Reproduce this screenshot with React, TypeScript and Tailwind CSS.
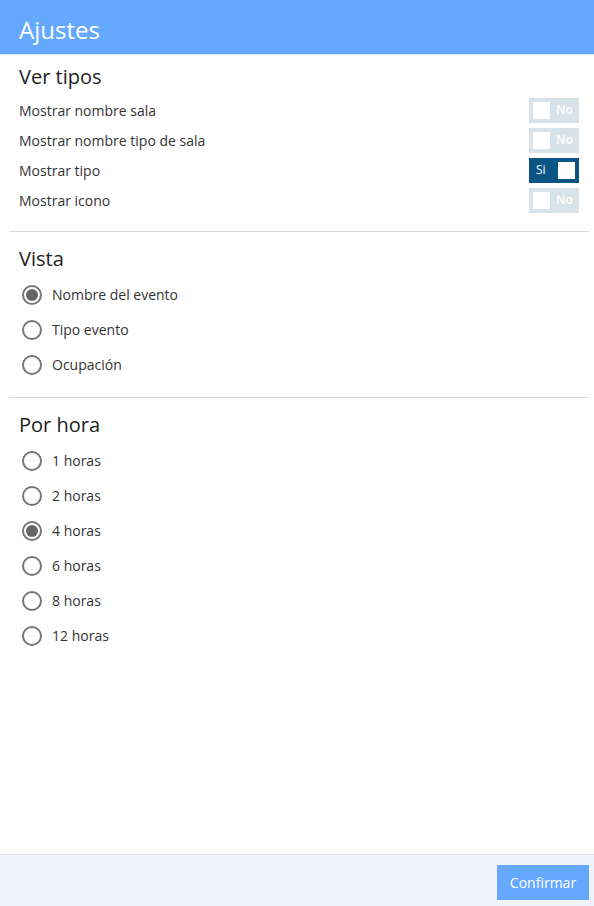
import { useState } from "react"

const font = { fontFamily: '"Open Sans", "Noto Sans", sans-serif' }

function Toggle({ on, onClick }: { on: boolean; onClick: () => void }) {
  return (
    <button
      onClick={onClick}
      className={`flex items-center w-[50px] h-[25px] px-1 ${on ? "bg-[#0b5585] justify-between" : "bg-[#d8e2e9]"}`}
    >
      {on ? (
        <>
          <span className="text-[12px] text-white pl-[3px]">Si</span>
          <span className="w-[17px] h-[17px] bg-white" />
        </>
      ) : (
        <>
          <span className="w-[17px] h-[17px] bg-white" />
          <span className="text-[12px] font-semibold text-white pl-[6px]">No</span>
        </>
      )}
    </button>
  )
}

function Radio({ label, checked, onClick }: { label: string; checked: boolean; onClick: () => void }) {
  return (
    <label onClick={onClick} className="flex items-center h-[35px] pl-[22px] cursor-pointer">
      <span className="w-[20px] h-[20px] rounded-full border-2 border-[#777] flex items-center justify-center">
        {checked && <span className="w-[12px] h-[12px] rounded-full bg-[#666]" />}
      </span>
      <span className="ml-[10px] text-[14px] text-[#333]">{label}</span>
    </label>
  )
}

export default function App() {
  const [tipos, setTipos] = useState([false, false, true, false])
  const [vista, setVista] = useState(0)
  const [hora, setHora] = useState(2)

  const tipoLabels = ["Mostrar nombre sala", "Mostrar nombre tipo de sala", "Mostrar tipo", "Mostrar icono"]
  const vistaLabels = ["Nombre del evento", "Tipo evento", "Ocupación"]
  const horaLabels = ["1 horas", "2 horas", "4 horas", "6 horas", "8 horas", "12 horas"]

  return (
    <div style={font} className="w-[594px] h-[906px] flex flex-col bg-white">
      <div className="h-[55px] bg-[#64a8ff] border-b border-[#e3e7ea] flex items-center px-[19px]">
        <h1 className="text-[24px] text-white leading-none pt-[5px]">Ajustes</h1>
      </div>

      <div className="flex-1">
        {/* Ver tipos */}
        <div className="pl-[19px] pr-[15px] pt-[8px] pb-[16px]">
          <h2 className="text-[20px] text-[#222] leading-[28px]">Ver tipos</h2>
          <div className="mt-[4px]">
            {tipoLabels.map((l, i) => (
              <div key={l} className="flex items-center justify-between h-[30px]">
                <span className="text-[14px] text-[#333]">{l}</span>
                <Toggle on={tipos[i]} onClick={() => setTipos(tipos.map((t, j) => (j === i ? !t : t)))} />
              </div>
            ))}
          </div>
        </div>

        <div className="ml-[9px] mr-[5px] h-px bg-[#d6dadd]" />

        {/* Vista */}
        <div className="pt-[13px] pb-[15px]">
          <h2 className="px-[19px] text-[20px] text-[#222] leading-[28px]">Vista</h2>
          <div className="mt-[4px]">
            {vistaLabels.map((l, i) => (
              <Radio key={l} label={l} checked={vista === i} onClick={() => setVista(i)} />
            ))}
          </div>
        </div>

        <div className="ml-[9px] mr-[5px] h-px bg-[#d6dadd]" />

        {/* Por hora */}
        <div className="pt-[13px]">
          <h2 className="px-[19px] text-[20px] text-[#222] leading-[28px]">Por hora</h2>
          <div className="mt-[4px]">
            {horaLabels.map((l, i) => (
              <Radio key={l} label={l} checked={hora === i} onClick={() => setHora(i)} />
            ))}
          </div>
        </div>
      </div>

      <div className="h-[52px] border-t border-[#dfe4e8] bg-[#f1f5f9] flex items-start justify-end pt-[10px] pr-[5px]">
        <button className="w-[92px] h-[35px] bg-[#64a8ff] text-white text-[14px]">Confirmar</button>
      </div>
    </div>
  )
}
